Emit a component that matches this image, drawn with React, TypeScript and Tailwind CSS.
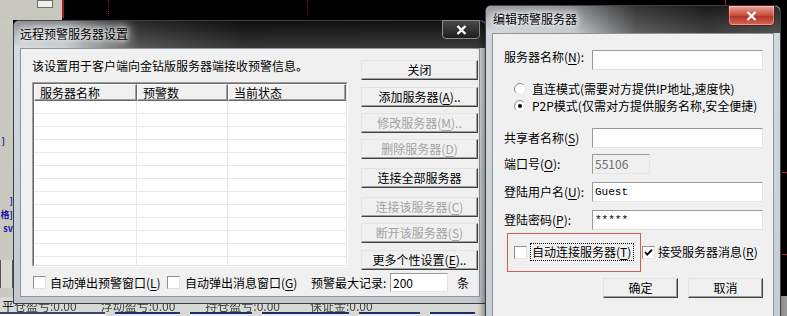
import React from "react";

// Two Win7-style dialogs (远程预警服务器设置 + 编辑预警服务器) over a dark trading desktop.

const CJK = "font-['Noto_Sans_CJK_SC','Noto_Sans',sans-serif]";

function Acc({ k }: { k: string }) {
  return (
    <>
      (<span className="underline underline-offset-[2px]">{k}</span>)
    </>
  );
}

function Btn({ children, disabled, className = "" }: { children: React.ReactNode; disabled?: boolean; className?: string }) {
  return (
    <div
      className={`flex h-5 items-center justify-center border border-t-[#e3e3e3] border-l-[#e3e3e3] border-r-[#404040] border-b-[#404040] bg-[#f0f0f0] shadow-[inset_-1px_-1px_0_#a0a0a0] text-[12px] leading-none ${
        disabled ? "text-[#a3a3a3]" : "text-black"
      } ${className}`}
    >
      {children}
    </div>
  );
}

function Field({ children, disabled, className = "" }: { children?: React.ReactNode; disabled?: boolean; className?: string }) {
  return (
    <div
      className={`flex h-5 items-center border border-t-[#9a9a9a] border-l-[#9a9a9a] border-r-[#e3e3e3] border-b-[#e3e3e3] px-[2px] ${
        disabled ? "bg-[#f0f0f0] text-[#6d6d6d]" : "bg-white text-black"
      } ${className}`}
    >
      {children}
    </div>
  );
}

function Check({ checked }: { checked?: boolean }) {
  return (
    <div className="h-[13px] w-[13px] shrink-0 border border-t-[#8f8f8f] border-l-[#8f8f8f] border-r-[#e3e3e3] border-b-[#e3e3e3] bg-white">
      {checked && (
        <svg width="11" height="11" viewBox="0 0 11 11" className="block">
          <path d="M2 5 L4.3 7.6 L9 2.6" stroke="#000" strokeWidth="1.8" fill="none" />
        </svg>
      )}
    </div>
  );
}

function Radio({ checked }: { checked?: boolean }) {
  return (
    <svg width="12" height="12" viewBox="0 0 12 12" className="shrink-0">
      <circle cx="6" cy="6" r="5.5" fill="#fff" />
      <path d="M9.9 2.1 A5.5 5.5 0 0 0 2.1 9.9" stroke="#8a8a8a" fill="none" />
      <path d="M2.1 9.9 A5.5 5.5 0 0 0 9.9 2.1" stroke="#e3e3e3" fill="none" />
      {checked && <circle cx="6" cy="6" r="2" fill="#000" />}
    </svg>
  );
}

function CloseX() {
  return (
    <svg width="11" height="10" viewBox="0 0 11 10">
      <path d="M1.5 1 L9.5 9 M9.5 1 L1.5 9" stroke="#fff" strokeWidth="2.4" />
    </svg>
  );
}

function HeadCell({ w, children }: { w: string; children: React.ReactNode }) {
  return (
    <div
      className={`${w} flex h-full items-center border border-t-white border-l-white border-r-[#696969] border-b-[#696969] bg-[#f0f0f0] pl-[5px] shadow-[inset_-1px_-1px_0_#a0a0a0] text-[12px]`}
    >
      {children}
    </div>
  );
}

function ListView() {
  const rows = Array.from({ length: 13 });
  return (
    <div className="mt-[9px] h-[185px] w-[316px] border border-t-[#a0a0a0] border-l-[#a0a0a0] border-r-white border-b-white">
      <div className="flex h-full flex-col overflow-hidden border border-t-[#696969] border-l-[#696969] border-r-[#e3e3e3] border-b-[#e3e3e3] bg-white">
        <div className="flex h-[17px] shrink-0">
          <HeadCell w="w-[103px]">服务器名称</HeadCell>
          <HeadCell w="w-[91px]">预警数</HeadCell>
          <HeadCell w="w-[118px]">当前状态</HeadCell>
        </div>
        {rows.map((_, i) => (
          <div key={i} className="grid h-[13px] shrink-0 grid-cols-[103px_91px_118px] border-b border-[#e9e9e9]">
            <div className="border-r border-[#e9e9e9]" />
            <div className="border-r border-[#e9e9e9]" />
            <div />
          </div>
        ))}
      </div>
    </div>
  );
}

function Desktop() {
  return (
    <>
      {/* top-left grey panel with scroll button */}
      <div className="absolute left-0 top-0 flex h-[20px] w-[62px] bg-[#c7c7bd]">
        <div className="ml-[37px] h-[8px] w-[16px] border border-[#6d6d6d] bg-[#eeeeea]" />
      </div>
      <div className="absolute left-[62px] top-0 h-[18px] w-[2px] bg-[#9b1c1c]" />
      <div className="absolute left-[108px] top-0 h-[16px] border-l border-dotted border-[#7a2020]" />
      <div className="absolute left-[307px] top-0 h-[14px] border-l border-dotted border-[#7a2020]" />
      <div className="absolute left-[725px] top-0 h-[6px] w-[1px] bg-[#c03030]" />

      {/* left strip, mostly hidden under the dialog */}
      <div className="absolute left-0 top-[20px] flex h-[280px] w-[13px] flex-col items-end overflow-hidden bg-[#c9c9bf] text-[9px] font-bold leading-[14px] text-[#1818a8]">
        <div className="mt-[114px] pr-[8px]">]</div>
        <div className="mt-[46px] whitespace-nowrap">]</div>
        <div className="whitespace-nowrap">格]</div>
        <div className="whitespace-nowrap">sv</div>
        <div className="mt-[24px] h-[28px] w-[13px] border-x border-[#555] bg-[#d8d8d0]" />
      </div>

      {/* bottom status strip */}
      <div className="absolute left-0 top-[297px] h-[19px] w-[490px] bg-[#d9d9d6]">
        <div className="flex whitespace-nowrap pl-[2px] pt-[2px] text-[12px] leading-[13px] text-[#222]">
          <span>平</span>
          <span className="blur-[0.6px] text-[#444]">仓盈亏:0.00</span>
          <span className="ml-[24px] blur-[0.6px] text-[#444]">浮动盈亏:0.00</span>
          <span className="ml-[30px] blur-[0.6px] text-[#444]">持仓盈亏:0.00</span>
          <span className="ml-[30px] blur-[0.6px] text-[#444]">保证金:0.00</span>
        </div>
        <div className="flex gap-[10px]">
          <div className="h-[4px] w-[105px] border-t-2 border-[#36456f] bg-white" />
          <div className="h-[4px] w-[65px] border-t-2 border-[#1d2e66] bg-[#e6ecf5]" />
          <div className="h-[4px] w-[62px] border-t-2 border-[#1d2e66] bg-[#e6ecf5]" />
          <div className="h-[4px] w-[87px] border-t-2 border-[#1d2e66] bg-[#e6ecf5]" />
          <div className="h-[4px] w-[61px] border-t-2 border-[#1d2e66] bg-[#e6ecf5]" />
          <div className="h-[4px] w-[45px] border-t-2 border-[#1d2e66] bg-[#e6ecf5]" />
        </div>
      </div>

      {/* right edge marks */}
      <div className="absolute left-[782px] top-[172px] h-[1px] w-[5px] bg-[#c02020]" />
      <div className="absolute left-[782px] top-[254px] h-[1px] w-[5px] bg-[#c02020]" />
      <div className="absolute left-[781px] top-[296px] h-[20px] w-[6px] bg-[#9a9a9a]" />
    </>
  );
}

function RemoteWarnWindow() {
  return (
    <div className="absolute left-[13px] top-[20px] flex h-[284px] w-[474px] flex-col rounded-t-[6px] border border-[#3a4048] bg-[linear-gradient(180deg,#d9dde2,#c3c8ce)]">
      {/* title bar */}
      <div className="relative flex h-[27px] shrink-0 items-center rounded-t-[6px] bg-[linear-gradient(180deg,rgba(0,0,0,0.35),rgba(255,255,255,0.14)),linear-gradient(90deg,#d6dade_0px,#c6cace_50px,#3c3c3c_125px,#161616_230px,#1b1b1b_100%)] pl-[6px] pb-[1px]">
        <span className="text-[12px] text-black [text-shadow:0_0_4px_#fff,0_0_8px_#fff,0_0_12px_#fff]">远程预警服务器设置</span>
        <div className="absolute left-[428px] top-[-1px] flex h-[19px] w-[38px] items-center justify-center rounded-b-[4px] border border-[#8c8c8c] bg-[linear-gradient(180deg,#4a4a4a,#1e1e1e)]">
          <CloseX />
        </div>
      </div>

      {/* client */}
      <div className="mx-[6px] flex h-[249px] flex-col border border-[#8b939b] bg-[#f0f0f0] pl-[11px] pt-[10px]">
        <div className="flex">
          <div className="flex w-[317px] flex-col">
            <div className="h-[14px] whitespace-nowrap text-[12px] leading-[14px]">该设置用于客户端向金钻版服务器端接收预警信息。</div>
            <ListView />
          </div>
          <div className="ml-[12px] flex w-[117px] flex-col pt-[1px]">
            <Btn>关闭</Btn>
            <Btn className="mt-[7px]">
              添加服务器<Acc k="A" />..
            </Btn>
            <Btn disabled className="mt-[6px]">
              修改服务器<Acc k="M" />..
            </Btn>
            <Btn disabled className="mt-[6px]">
              删除服务器<Acc k="D" />
            </Btn>
            <Btn className="mt-[9px]">连接全部服务器</Btn>
            <Btn disabled className="mt-[9px]">
              连接该服务器<Acc k="C" />
            </Btn>
            <Btn disabled className="mt-[6px]">
              断开该服务器<Acc k="S" />
            </Btn>
            <Btn className="mt-[7px]">
              更多个性设置<Acc k="E" />..
            </Btn>
          </div>
        </div>

        <div className="mt-[3px] flex h-[19px] items-center whitespace-nowrap text-[12px]">
          <div className="flex w-[135px] items-center gap-[4px] pl-[1px]">
            <Check />
            <span>
              自动弹出预警窗口<Acc k="L" />
            </span>
          </div>
          <div className="flex w-[144px] items-center gap-[5px]">
            <Check />
            <span>
              自动弹出消息窗口<Acc k="G" />
            </span>
          </div>
          <span className="w-[79px]">预警最大记录:</span>
          <Field className="h-[19px] w-[58px] text-[12px]">200</Field>
          <span className="ml-[9px]">条</span>
        </div>
      </div>
    </div>
  );
}

function EditServerWindow() {
  return (
    <div className="absolute left-[485px] top-[5px] flex h-[330px] w-[296px] flex-col rounded-t-[6px] border border-[#3a4048] bg-[linear-gradient(180deg,#d3d8dd,#c6ccd2)] shadow-[-2px_0_6px_rgba(0,0,0,0.45)]">
      {/* title bar */}
      <div className="relative flex h-[27px] shrink-0 items-center rounded-t-[6px] bg-[linear-gradient(180deg,rgba(0,0,0,0.3),rgba(255,255,255,0.12)),linear-gradient(90deg,#d2d6da_0px,#c2c6ca_85px,#4a4a4a_150px,#262626_220px,#3a3a3a_100%)] pl-[7px] pb-[2px]">
        <span className="text-[12px] text-black [text-shadow:0_0_4px_#fff,0_0_8px_#fff,0_0_12px_#fff]">编辑预警服务器</span>
        <div className="absolute left-[242px] top-[-1px] flex h-[21px] w-[47px] items-center justify-center rounded-b-[4px] border border-[#5a1d1d] bg-[linear-gradient(180deg,#e9a79a,#c8483a_50%,#b2302a_51%,#d46a50)] shadow-[inset_0_0_0_1px_rgba(255,255,255,0.35)]">
          <CloseX />
        </div>
      </div>

      {/* client */}
      <div className="relative mx-[6px] flex flex-1 flex-col border border-[#8b939b] bg-[#f0f0f0] pl-[11px] pt-[16px] text-[12px]">
        <div className="flex h-5 items-start">
          <span className="w-[88px] whitespace-nowrap leading-[14px]">
            服务器名称<Acc k="N" />:
          </span>
          <Field className="w-[171px]" />
        </div>

        <div className="mt-[10px] flex h-[17px] items-center gap-[6px] whitespace-nowrap pl-[10px]">
          <Radio />
          <span>直连模式(需要对方提供IP地址,速度快)</span>
        </div>
        <div className="flex h-[17px] items-center gap-[6px] whitespace-nowrap pl-[10px]">
          <Radio checked />
          <span>P2P模式(仅需对方提供服务名称,安全便捷)</span>
        </div>

        <div className="mt-[14px] flex h-5 items-center">
          <span className="w-[88px] whitespace-nowrap">
            共享者名称<Acc k="S" />
          </span>
          <Field className="w-[171px]" />
        </div>
        <div className="mt-[6px] flex h-5 items-center">
          <span className="w-[88px] whitespace-nowrap">
            端口号<Acc k="O" />:
          </span>
          <Field disabled className="w-[58px] text-[12px]">
            55106
          </Field>
        </div>
        <div className="mt-[8px] flex h-5 items-center">
          <span className="w-[88px] whitespace-nowrap">
            登陆用户名<Acc k="U" />:
          </span>
          <Field className="w-[171px] font-['Liberation_Mono',monospace] text-[11px]">Guest</Field>
        </div>
        <div className="mt-[8px] flex h-5 items-center">
          <span className="w-[88px] whitespace-nowrap">
            登陆密码<Acc k="P" />:
          </span>
          <Field className="w-[171px] font-['Liberation_Mono',monospace] text-[11px]">*****</Field>
        </div>

        <div className="mt-[13px] flex h-[18px] items-center whitespace-nowrap pl-[10px]">
          <Check />
          <span className="ml-[3px] flex h-[18px] w-[104px] items-center border border-dotted border-black pl-[1px]">
            自动连接服务器<Acc k="T" />
          </span>
          <div className="ml-[8px]">
            <Check checked />
          </div>
          <span className="ml-[3px]">
            接受服务器消息<Acc k="R" />
          </span>
        </div>

        <div className="mt-[17px] flex pl-[99px]">
          <Btn className="w-[75px]">确定</Btn>
          <Btn className="ml-[10px] w-[75px]">取消</Btn>
        </div>

        {/* red annotation box */}
        <div className="absolute left-[14px] top-[199px] h-[39px] w-[134px] border border-[#d65a5a]" />
      </div>
    </div>
  );
}

export default function App() {
  return (
    <div className={`relative h-[316px] w-[787px] overflow-hidden bg-black text-[12px] text-black ${CJK}`}>
      <Desktop />
      <RemoteWarnWindow />
      <EditServerWindow />
    </div>
  );
}
